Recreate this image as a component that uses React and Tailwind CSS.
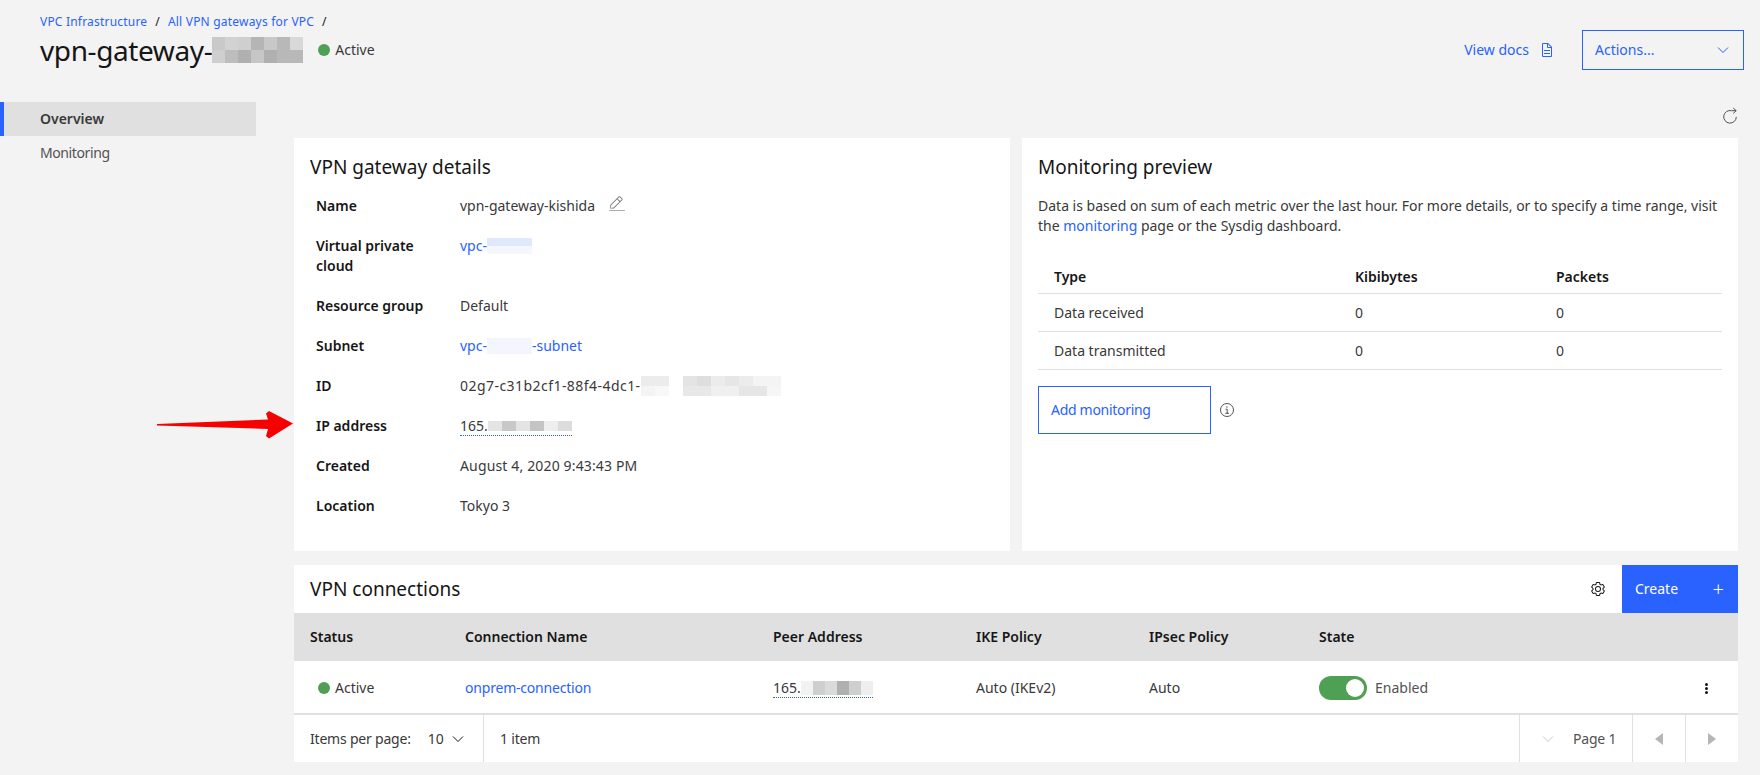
import React from "react";

const Blur = ({ rows, cell = "w-[14px] h-[13px]" }) => (
  <span className="inline-flex flex-col align-middle">
    {rows.map((row, i) => (
      <span key={i} className="flex">
        {row.map((color, j) => (
          <span key={j} className={`${cell} ${color}`} />
        ))}
      </span>
    ))}
  </span>
);

const CarbonIcon = ({ size = 16, className = "", children }) => (
  <svg width={size} height={size} viewBox="0 0 32 32" fill="currentColor" className={`shrink-0 ${className}`}>
    {children}
  </svg>
);

const DocIcon = () => (
  <CarbonIcon size={16} className="text-[#2962ff]">
    <path d="M25.7,9.3l-7-7A.91.91,0,0,0,18,2H8A2,2,0,0,0,6,4V28a2,2,0,0,0,2,2H24a2,2,0,0,0,2-2V10A.91.91,0,0,0,25.7,9.3ZM18,4.4,23.6,10H18ZM24,28H8V4h8v6a2,2,0,0,0,2,2h6Z" />
    <path d="M10 22H22V24H10z" />
    <path d="M10 16H22V18H10z" />
  </CarbonIcon>
);

const EditIcon = () => (
  <CarbonIcon size={18} className="text-[#6f6f6f]">
    <path d="M2 27H30V28H2z" />
    <path d="M25.4,9c0.8-0.8,0.8-2,0-2.8l-3.6-3.6c-0.8-0.8-2-0.8-2.8,0l-15,15V24h6.4L25.4,9z M20.4,3.6L24.6,7.6l-3.2,3.2L17.2,6.8L20.4,3.6z M5.2,22.8v-4.2l11-11l4.2,4.2l-11,11H5.2z" />
  </CarbonIcon>
);

const GearIcon = () => (
  <CarbonIcon size={16} className="text-[#161616]">
    <path d="M27,16.76c0-.25,0-.5,0-.76s0-.51,0-.77l1.92-1.68A2,2,0,0,0,29.3,11L26.94,7a2,2,0,0,0-1.73-1,2,2,0,0,0-.64.1l-2.43.82a11.35,11.35,0,0,0-1.31-.75l-.51-2.52a2,2,0,0,0-2-1.61H13.64a2,2,0,0,0-2,1.61l-.51,2.52a11.48,11.48,0,0,0-1.32.75L7.43,6.06A2,2,0,0,0,6.79,6,2,2,0,0,0,5.06,7L2.7,11a2,2,0,0,0,.41,2.51L5,15.24c0,.25,0,.5,0,.76s0,.51,0,.77L3.11,18.45A2,2,0,0,0,2.7,21L5.06,25a2,2,0,0,0,1.73,1,2,2,0,0,0,.64-.1l2.43-.82a11.35,11.35,0,0,0,1.31.75l.51,2.52a2,2,0,0,0,2,1.61h4.72a2,2,0,0,0,2-1.61l.51-2.52a11.48,11.48,0,0,0,1.32-.75l2.42.82a2,2,0,0,0,.64.1,2,2,0,0,0,1.73-1L29.3,21a2,2,0,0,0-.41-2.51ZM25.21,24l-3.43-1.16a8.86,8.86,0,0,1-2.71,1.57L18.36,28H13.64l-.71-3.55a9.36,9.36,0,0,1-2.7-1.57L6.79,24,4.43,20l2.72-2.4a8.9,8.9,0,0,1,0-3.13L4.43,12,6.79,8l3.43,1.16a8.86,8.86,0,0,1,2.71-1.57L13.64,4h4.72l.71,3.55a9.36,9.36,0,0,1,2.7,1.57L25.21,8,27.57,12l-2.72,2.4a8.9,8.9,0,0,1,0,3.13L27.57,20Z" />
    <path d="M16,22a6,6,0,1,1,6-6A5.94,5.94,0,0,1,16,22Zm0-10a3.91,3.91,0,0,0-4,4,3.91,3.91,0,0,0,4,4,3.91,3.91,0,0,0,4-4A3.91,3.91,0,0,0,16,12Z" />
  </CarbonIcon>
);

const InfoIcon = () => (
  <svg width="16" height="16" viewBox="0 0 16 16" fill="none" stroke="#525252" className="shrink-0">
    <circle cx="8" cy="8" r="6.5" />
    <path d="M6.5 7.2H8.2V11.3M6.3 11.3H10" />
    <circle cx="7.9" cy="5" r="0.7" fill="#525252" stroke="none" />
  </svg>
);

const RefreshIcon = () => (
  <svg width="16" height="18" viewBox="0 0 16 18" fill="none" stroke="#525252" className="shrink-0">
    <path d="M14.3 9.8A6.3 6.3 0 1 1 9.5 3.7H14.2" />
    <path d="M11.2 1L14.2 3.7L11.2 6.4" />
  </svg>
);

const Chevron = ({ className = "text-[#161616]", size = 16 }) => (
  <svg width={size} height={size} viewBox="0 0 16 16" fill="none" stroke="currentColor" className={`shrink-0 ${className}`}>
    <path d="M3 5.5L8 10.5L13 5.5" />
  </svg>
);

const StatusDot = () => <span className="w-3 h-3 rounded-full bg-[#4f9f55] shrink-0" />;

const DetailRow = ({ label, children }) => (
  <div className="flex pb-5 text-sm leading-5">
    <div className="w-[144px] pr-6 font-semibold text-[#161616] shrink-0">{label}</div>
    <div className="flex items-center h-5 text-[#393939]">{children}</div>
  </div>
);

const Link = ({ children }) => <span className="text-[#2962ff]">{children}</span>;

const connectionCols = "grid grid-cols-[155px_308px_203px_173px_170px_1fr] items-center";
const monitoringCols = "grid grid-cols-[301px_201px_1fr] items-center h-[38px] pl-4 border-b border-[#e0e0e0]";

export default function App() {
  return (
    <div className="relative h-[775px] overflow-hidden bg-[#f3f3f3] font-['Noto_Sans',sans-serif] text-[#161616]">
      {/* Page header */}
      <header className="flex justify-between pl-10 pr-4 h-[102px]">
        <div className="pt-[14px]">
          <div className="flex items-center gap-2 h-4 text-xs tracking-[0.2px] text-[#2962ff]">
            <span>VPC Infrastructure</span>
            <span className="text-[#161616]">/</span>
            <span>All VPN gateways for VPC</span>
            <span className="text-[#161616]">/</span>
          </div>
          <div className="flex items-center h-[40px]">
            <h1 className="text-[28px] leading-9 tracking-[-0.4px] text-[#161616]">vpn-gateway-</h1>
            <Blur
              rows={[
                ["bg-[#c9c9c9]", "bg-[#d2d2d2]", "bg-[#cfcfcf]", "bg-[#b5b5b5]", "bg-[#c8c8c8]", "bg-[#b8b8b8]", "bg-[#d8d8d8]"],
                ["bg-[#cfcfcf]", "bg-[#bdbdbd]", "bg-[#b0b0b0]", "bg-[#c6c6c6]", "bg-[#b0b0b0]", "bg-[#b8b8b8]", "bg-[#b8b8b8]"],
              ]}
              cell="w-[13px] h-[13px]"
            />
            <span className="flex items-center gap-[5px] ml-[15px] text-sm text-[#393939]">
              <StatusDot />
              Active
            </span>
          </div>
        </div>
        <div className="flex items-center h-10 mt-[30px]">
          <span className="text-sm text-[#2962ff]">View docs</span>
          <span className="ml-[10px]">
            <DocIcon />
          </span>
          <div className="flex items-center justify-between w-[162px] h-10 ml-[27px] pl-3 pr-3 border border-[#2962ff] text-sm text-[#2962ff]">
            Actions...
            <Chevron className="text-[#2962ff]" />
          </div>
        </div>
      </header>

      <div className="flex">
        {/* Side nav */}
        <nav className="w-[256px] shrink-0 text-sm">
          <div className="flex items-center h-[34px] pl-9 border-l-4 border-[#2962ff] bg-[#e0e0e0] font-semibold text-[#393939]">
            Overview
          </div>
          <div className="flex items-center h-[34px] pl-10 tracking-[-0.4px] text-[#525252]">Monitoring</div>
        </nav>

        <main className="flex-1 pl-[38px] pr-[22px]">
          <div className="flex justify-end items-center h-9 pb-2 pr-0">
            <RefreshIcon />
          </div>

          <div className="flex gap-3">
            {/* VPN gateway details */}
            <section className="flex-1 h-[413px] bg-white px-4 pt-[17px]">
              <h2 className="text-[19px] leading-6 text-[#161616] mb-[17px]">VPN gateway details</h2>
              <div className="pl-[6px]">
                <DetailRow label="Name">
                  <span>vpn-gateway-kishida</span>
                  <span className="ml-[13px] -mt-1">
                    <EditIcon />
                  </span>
                </DetailRow>
                <DetailRow label={<>Virtual private<br />cloud</>}>
                  <Link>vpc-</Link>
                  <Blur rows={[["bg-[#e0e8fb]"], ["bg-[#f5f7fe]"]]} cell="w-[45px] h-[8px]" />
                </DetailRow>
                <DetailRow label="Resource group">Default</DetailRow>
                <DetailRow label="Subnet">
                  <Link>vpc-</Link>
                  <span className="w-[45px] h-4 bg-[#f3f6fe]" />
                  <Link>-subnet</Link>
                </DetailRow>
                <DetailRow label="ID">
                  <span className="tracking-[0.45px]">02g7-c31b2cf1-88f4-4dc1-</span>
                  <Blur
                    rows={[
                      ["bg-[#ececec]", "bg-[#ececec]", "bg-[#ffffff]", "bg-[#e4e4e4]", "bg-[#dedede]", "bg-[#ececec]", "bg-[#e6e6e6]", "bg-[#ececec]", "bg-[#f4f4f4]", "bg-[#f4f4f4]"],
                      ["bg-[#f4f4f4]", "bg-[#f8f8f8]", "bg-[#ffffff]", "bg-[#e8e8e8]", "bg-[#e8e8e8]", "bg-[#f0f0f0]", "bg-[#f0f0f0]", "bg-[#e6e6e6]", "bg-[#e6e6e6]", "bg-[#f6f6f6]"],
                    ]}
                    cell="w-[14px] h-[10px]"
                  />
                </DetailRow>
                <DetailRow label="IP address">
                  <span className="flex items-center h-5 border-b border-dotted border-[#2962ff]">
                    <span>165.</span>
                    <Blur
                      rows={[["bg-[#e4e4e4]", "bg-[#c8c8c8]", "bg-[#e4e4e4]", "bg-[#c4c4c4]", "bg-[#eeeeee]", "bg-[#dcdcdc]"]]}
                      cell="w-[14px] h-[10px]"
                    />
                  </span>
                </DetailRow>
                <DetailRow label="Created">
                  <span className="tracking-[0.15px]">August 4, 2020 9:43:43 PM</span>
                </DetailRow>
                <DetailRow label="Location">Tokyo 3</DetailRow>
              </div>
            </section>

            {/* Monitoring preview */}
            <section className="flex-1 h-[413px] bg-white px-4 pt-[17px]">
              <h2 className="text-[19px] leading-6 text-[#161616] mb-[17px]">Monitoring preview</h2>
              <p className="text-sm leading-5 text-[#393939] mb-[20px]">
                Data is based on sum of each metric over the last hour. For more details, or to specify a time range, visit
                <br />
                the <Link>monitoring</Link> page or the Sysdig dashboard.
              </p>
              <div className="text-sm">
                <div className={`${monitoringCols} pt-1 font-semibold`}>
                  <span>Type</span>
                  <span>Kibibytes</span>
                  <span>Packets</span>
                </div>
                <div className={`${monitoringCols} text-[#393939]`}>
                  <span>Data received</span>
                  <span>0</span>
                  <span>0</span>
                </div>
                <div className={`${monitoringCols} text-[#393939]`}>
                  <span>Data transmitted</span>
                  <span>0</span>
                  <span>0</span>
                </div>
              </div>
              <div className="flex items-center gap-2 mt-4">
                <div className="flex items-center w-[173px] h-12 pl-3 border border-[#2962ff] text-sm tracking-[-0.3px] text-[#2962ff]">
                  Add monitoring
                </div>
                <InfoIcon />
              </div>
            </section>
          </div>

          {/* VPN connections */}
          <section className="mt-[14px] bg-white">
            <div className="flex items-center h-12 pl-4">
              <h2 className="flex-1 text-[19px] leading-6 text-[#161616]">VPN connections</h2>
              <GearIcon />
              <div className="flex items-center justify-between w-[116px] h-12 ml-4 pl-[13px] pr-[14px] bg-[#2962ff] text-sm text-white">
                Create
                <span className="text-xl leading-none font-light">+</span>
              </div>
            </div>
            <div className={`${connectionCols} h-12 pl-4 bg-[#e0e0e0] text-sm font-semibold`}>
              <span>Status</span>
              <span>Connection Name</span>
              <span>Peer Address</span>
              <span>IKE Policy</span>
              <span>IPsec Policy</span>
              <span>State</span>
            </div>
            <div className={`${connectionCols} h-[54px] pl-4 pt-[2px] border-b-2 border-[#e0e0e0] text-sm text-[#393939]`}>
              <span className="flex items-center gap-[5px] pl-2">
                <StatusDot />
                Active
              </span>
              <span className="tracking-[-0.2px]">
                <Link>onprem-connection</Link>
              </span>
              <span>
                <span className="inline-flex items-center h-5 border-b border-dotted border-[#2962ff]">
                  <span>165.</span>
                  <Blur
                    rows={[["bg-[#f2f2f2]", "bg-[#cfcfcf]", "bg-[#dadada]", "bg-[#b0b0b0]", "bg-[#cfcfcf]", "bg-[#eeeeee]"]]}
                    cell="w-[12px] h-[14px]"
                  />
                </span>
              </span>
              <span>Auto (IKEv2)</span>
              <span>Auto</span>
              <span className="flex items-center justify-between pr-[30px]">
                <span className="flex items-center gap-2">
                  <span className="flex items-center justify-end w-12 h-6 pr-[3px] rounded-full bg-[#4f9f55]">
                    <span className="w-[18px] h-[18px] rounded-full bg-white" />
                  </span>
                  <span className="text-[#525252]">Enabled</span>
                </span>
                <span className="flex flex-col gap-[1px]">
                  <span className="w-[3px] h-[3px] rounded-full bg-[#161616]" />
                  <span className="w-[3px] h-[3px] rounded-full bg-[#161616]" />
                  <span className="w-[3px] h-[3px] rounded-full bg-[#161616]" />
                </span>
              </span>
            </div>

            {/* Pagination */}
            <div className="flex items-center h-[47px] text-sm text-[#393939]">
              <div className="flex items-center h-full w-[190px] pl-4 border-r border-[#e0e0e0]">
                <span className="tracking-[-0.2px]">Items per page:</span>
                <span className="ml-[17px]">10</span>
                <span className="ml-[6px]">
                  <Chevron />
                </span>
              </div>
              <span className="flex-1 pl-4 tracking-[-0.2px]">1 item</span>
              <div className="flex items-center h-full w-[113px] pl-[20px] border-l border-[#e0e0e0]">
                <Chevron className="text-[#c6c6c6]" />
                <span className="ml-[17px] tracking-[-0.2px] text-[#525252]">Page 1</span>
              </div>
              <div className="flex items-center justify-center h-full w-[53px] border-l border-[#e0e0e0]">
                <span className="w-0 h-0 border-y-[6px] border-y-transparent border-r-[8px] border-r-[#b5b5b5]" />
              </div>
              <div className="flex items-center justify-center h-full w-[53px] border-l border-[#e0e0e0]">
                <span className="w-0 h-0 border-y-[6px] border-y-transparent border-l-[8px] border-l-[#b5b5b5]" />
              </div>
            </div>
          </section>
        </main>
      </div>

      {/* Annotation arrow over the details panel */}
      <svg className="absolute left-[156px] top-[410px]" width="140" height="30" viewBox="0 0 140 30">
        <path d="M1 14L112 9.5L110 3.5L113 1L137 13.5L113 28.5L110 26L112 19L1 15.5Z" fill="#f60000" />
      </svg>
    </div>
  );
}
